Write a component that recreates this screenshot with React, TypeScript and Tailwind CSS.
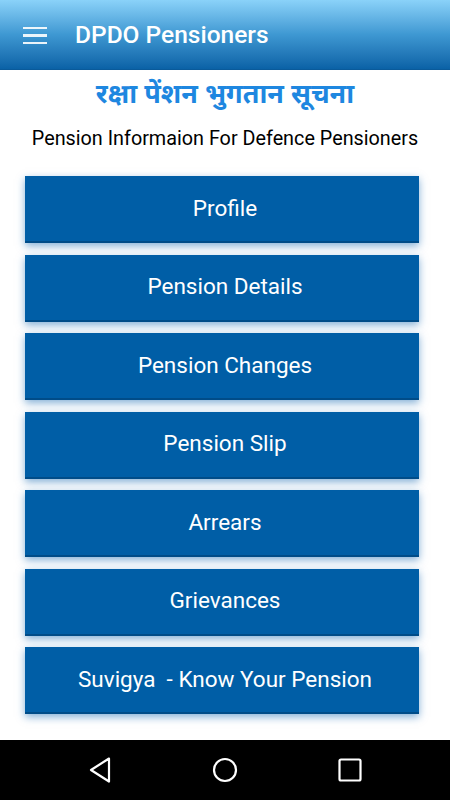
import React from "react";

const items = [
  "Profile",
  "Pension Details",
  "Pension Changes",
  "Pension Slip",
  "Arrears",
  "Grievances",
  "Suvigya  - Know Your Pension",
];

export default function App() {
  return (
    <div className="w-[450px] h-[800px] flex flex-col bg-white overflow-hidden" style={{ fontFamily: "Roboto, 'Noto Sans', sans-serif" }}>
      <div className="h-[70px] shrink-0 flex items-center bg-gradient-to-b from-[#8ad2f9] via-[#3e98d2] to-[#0a62a6] border-b border-[#0a5a9a]">
        <div className="w-[24px] ml-[23px] mt-[2px] flex flex-col gap-[5px]">
          <div className="h-[2.5px] bg-white/90" />
          <div className="h-[2.5px] bg-white/90" />
          <div className="h-[2.5px] bg-white/90" />
        </div>
        <div className="ml-[28px] mt-[2px] text-white text-[24.5px] font-medium">DPDO Pensioners</div>
      </div>
      <div className="flex-1 flex flex-col">
        <div className="mt-[8px] h-[38px] flex items-center justify-center text-[#1e87e0] text-[27px] font-bold whitespace-pre" style={{ fontFamily: "'Noto Sans Devanagari', 'Noto Sans', 'Lohit Devanagari', sans-serif" }}>
          रक्षा पेंशन भुगतान सूचना
        </div>
        <div className="mt-[11px] text-center text-black text-[19.8px] leading-[24px]">Pension Informaion For Defence Pensioners</div>
        <div className="mt-[25px] ml-[25px] w-[394px] flex flex-col gap-[11.5px]">
          {items.map((t) => (
            <div
              key={t}
              className="h-[67px] pl-[6px] bg-[#005ea6] border-b-2 border-[#004c88] flex items-center justify-center text-white text-[22.5px] whitespace-pre shadow-[0_3px_8px_rgba(30,110,180,0.55)]"
            >
              {t}
            </div>
          ))}
        </div>
      </div>
      <div className="h-[60px] shrink-0 bg-black flex items-center pl-[75px] gap-[75px]">
        <div className="w-[50px] flex justify-center">
          <svg width="22" height="26" viewBox="0 0 22 26">
            <path d="M20 1.5 L2 13 L20 24.5 Z" fill="none" stroke="white" strokeWidth="2.2" strokeLinejoin="round" />
          </svg>
        </div>
        <div className="w-[50px] flex justify-center">
          <svg width="26" height="26" viewBox="0 0 26 26">
            <circle cx="13" cy="13" r="11" fill="none" stroke="white" strokeWidth="2.2" />
          </svg>
        </div>
        <div className="w-[50px] flex justify-center">
          <svg width="24" height="24" viewBox="0 0 24 24">
            <rect x="1.5" y="1.5" width="21" height="21" rx="1.5" fill="none" stroke="white" strokeWidth="2.2" />
          </svg>
        </div>
      </div>
    </div>
  );
}
